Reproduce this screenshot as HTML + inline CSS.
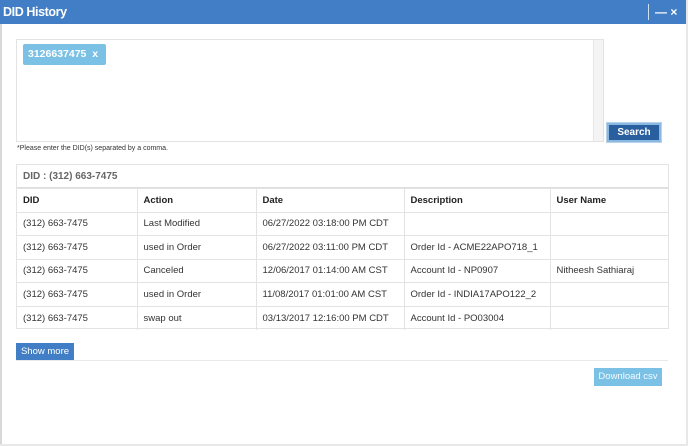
<!DOCTYPE html>
<html><head><style>
*{margin:0;padding:0;box-sizing:border-box}
body{width:688px;height:446px;background:#e8e8e8;font-family:"Liberation Sans",sans-serif;position:relative;overflow:hidden}
.win{position:absolute;left:0;top:0;width:686px;height:444px;background:#fff}
.lb{position:absolute;left:0;top:0;width:2px;height:444px;background:#d8d8d8}
.title{position:absolute;left:0;top:0;width:686px;height:24px;background:#417ec6;color:#fff;font-weight:bold;font-size:12.5px;line-height:24px;padding-left:3px;letter-spacing:-0.4px}
.sep{position:absolute;left:648px;top:4px;width:1px;height:16px;background:#cfe0f3}
.ctl{position:absolute;top:0;left:655px;color:#fff;font-weight:bold;font-size:12px;line-height:24px}
.ta{position:absolute;left:16px;top:39px;width:588px;height:103px;border:1px solid #e3e3e3}
.sb{position:absolute;right:0;top:0;width:10px;height:101px;background:#f4f4f4;border-left:1px solid #e6e6e6}
.tag{position:absolute;left:6px;top:4px;width:83px;height:21px;background:#7bc1e5;border-radius:2px;color:#fff;font-weight:bold;font-size:10.5px;line-height:21px;padding-left:5px}
.search{position:absolute;left:607px;top:123px;width:54px;height:19px;background:#2a5f9f;border:2px solid #8bb8e0;outline:1px solid #b6d3ec;color:#fff;font-weight:bold;font-size:10px;text-align:center;line-height:15px}
.hint{position:absolute;left:17px;top:145px;font-size:7px;color:#333}
.panel{position:absolute;left:16px;top:164px;width:653px;height:165px;border:1px solid #e3e3e3}
.ph{height:23px;line-height:23px;padding-left:6px;font-weight:bold;font-size:10px;color:#666;border-bottom:1px solid #ddd}
table{border-collapse:collapse;width:652px;font-size:9.5px;color:#333}
td,th{border:1px solid #e3e3e3;text-align:left;padding-left:6px;height:23.5px}
th{font-weight:bold;color:#222}
tr>*:first-child{border-left:none}
tr>*:last-child{border-right:none}
tr:last-child td{border-bottom:none}
.show{position:absolute;left:16px;top:343px;width:58px;height:17px;background:#417ec6;color:#fff;font-size:9.5px;line-height:17px;text-align:center}
.hr{position:absolute;left:16px;top:360px;width:652px;height:1px;background:#e8e8e8}
.dl{position:absolute;left:594px;top:368px;width:68px;height:18px;background:#7bc1e5;color:#f4fbff;font-size:9.5px;line-height:18px;text-align:center}
</style></head><body>
<div class="win">
<div class="lb"></div>
<div class="title">DID History</div>
<div class="sep"></div>
<div class="ctl">&#8212; &#215;</div>
<div class="ta"><div class="tag">3126637475 &nbsp;x</div><div class="sb"></div></div>
<div class="search">Search</div>
<div class="hint">*Please enter the DID(s) separated by a comma.</div>
<div class="panel"><div class="ph">DID : (312) 663-7475</div>
<table>
<colgroup><col style="width:120px"><col style="width:119px"><col style="width:148px"><col style="width:146px"><col></colgroup>
<tr><th>DID</th><th>Action</th><th>Date</th><th>Description</th><th>User Name</th></tr>
<tr><td>(312) 663-7475</td><td>Last Modified</td><td>06/27/2022 03:18:00 PM CDT</td><td></td><td></td></tr>
<tr><td>(312) 663-7475</td><td>used in Order</td><td>06/27/2022 03:11:00 PM CDT</td><td>Order Id - ACME22APO718_1</td><td></td></tr>
<tr><td>(312) 663-7475</td><td>Canceled</td><td>12/06/2017 01:14:00 AM CST</td><td>Account Id - NP0907</td><td>Nitheesh Sathiaraj</td></tr>
<tr><td>(312) 663-7475</td><td>used in Order</td><td>11/08/2017 01:01:00 AM CST</td><td>Order Id - INDIA17APO122_2</td><td></td></tr>
<tr><td>(312) 663-7475</td><td>swap out</td><td>03/13/2017 12:16:00 PM CDT</td><td>Account Id - PO03004</td><td></td></tr>
</table></div>
<div class="show">Show more</div>
<div class="hr"></div>
<div class="dl">Download csv</div>
</div>
</body></html>
